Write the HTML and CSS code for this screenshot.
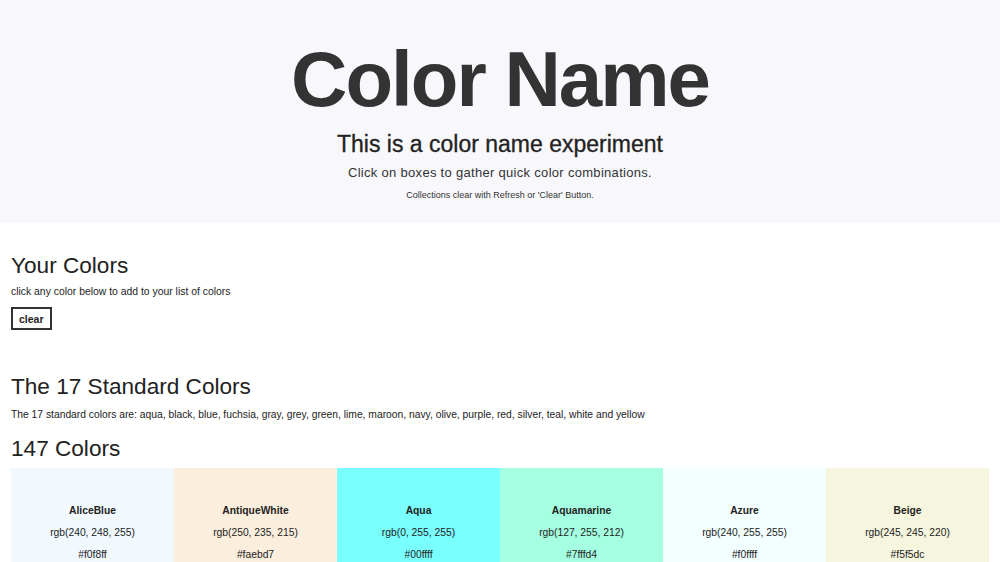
FILE: index.html
```html
<!DOCTYPE html>
<html>
<head>
<meta charset="utf-8">
<link rel="stylesheet" href="styles.css">
</head>
<body>
<header class="hero">
  <h1 class="hero-title">Color Name</h1>
  <h2 class="hero-sub">This is a color name experiment</h2>
  <p class="hero-lead">Click on boxes to gather quick color combinations.</p>
  <p class="hero-note">Collections clear with Refresh or 'Clear' Button.</p>
</header>
<main class="content">
  <section class="your">
    <h2 class="section-title">Your Colors</h2>
    <p class="small">click any color below to add to your list of colors</p>
    <button class="clear-btn">clear</button>
  </section>
  <section class="standard">
    <h2 class="section-title">The 17 Standard Colors</h2>
    <p class="small standard-text">The 17 standard colors are: aqua, black, blue, fuchsia, gray, grey, green, lime, maroon, navy, olive, purple, red, silver, teal, white and yellow</p>
  </section>
  <section class="all">
    <h2 class="section-title">147 Colors</h2>
    <div class="grid">
      <div class="swatch" style="background: rgba(240,248,255,0.9)">
        <div class="name">AliceBlue</div><div class="val">rgb(240, 248, 255)</div><div class="val">#f0f8ff</div>
      </div>
      <div class="swatch" style="background: rgba(250,235,215,0.85)">
        <div class="name">AntiqueWhite</div><div class="val">rgb(250, 235, 215)</div><div class="val">#faebd7</div>
      </div>
      <div class="swatch" style="background: rgba(0,255,255,0.52)">
        <div class="name">Aqua</div><div class="val">rgb(0, 255, 255)</div><div class="val">#00ffff</div>
      </div>
      <div class="swatch" style="background: rgba(127,255,212,0.7)">
        <div class="name">Aquamarine</div><div class="val">rgb(127, 255, 212)</div><div class="val">#7fffd4</div>
      </div>
      <div class="swatch" style="background: rgba(240,255,255,0.8)">
        <div class="name">Azure</div><div class="val">rgb(240, 255, 255)</div><div class="val">#f0ffff</div>
      </div>
      <div class="swatch" style="background: rgba(245,245,220,0.95)">
        <div class="name">Beige</div><div class="val">rgb(245, 245, 220)</div><div class="val">#f5f5dc</div>
      </div>
    </div>
  </section>
</main>
</body>
</html>
```
FILE: styles.css
```css
* { box-sizing: border-box; }
html, body { margin: 0; padding: 0; }
body {
  font-family: "Liberation Sans", Arial, sans-serif;
  color: #333;
  background: #fff;
}
.hero {
  background: #f8f8fc;
  height: 223px;
  padding-top: 38px;
  text-align: center;
}
.hero-title {
  margin: 0;
  font-size: 78px;
  font-weight: bold;
  line-height: 82px;
  color: #333;
  letter-spacing: -2px;
}
.hero-sub {
  margin: 10px 0 0;
  font-size: 23px;
  font-weight: normal;
  line-height: 28px;
  color: #222;
  -webkit-text-stroke: 0.3px #222;
}
.hero-lead {
  margin: 6px 0 0;
  font-size: 13px;
  letter-spacing: 0.3px;
  line-height: 17px;
}
.hero-note {
  margin: 8px 0 0;
  font-size: 9px;
  line-height: 12px;
}
.content {
  padding: 0 11px;
}
.section-title {
  margin: 0;
  font-size: 22.6px;
  font-weight: normal;
  line-height: 26px;
  color: #222;
}
.your { padding-top: 30px; }
.small {
  margin: 6px 0 0;
  font-size: 10.4px;
  line-height: 14px;
  color: #222;
}
.standard-text {
  margin-top: 8px;
  font-size: 10.3px;
}
.clear-btn {
  margin-top: 8px;
  background: #fff;
  border: 2px solid #333;
  border-radius: 0;
  padding: 0 6px;
  height: 23px;
  font-family: inherit;
  font-size: 10.5px;
  font-weight: bold;
  color: #222;
}
.standard { padding-top: 44px; }
.all { padding-top: 14px; }
.grid {
  margin-top: 6px;
  display: grid;
  grid-template-columns: repeat(6, 163px);
}
.swatch {
  height: 110px;
  padding-top: 36px;
  text-align: center;
  font-size: 10.3px;
  color: #222;
}
.swatch .name {
  font-weight: bold;
  line-height: 14px;
  margin-bottom: 8px;
}
.swatch .val {
  line-height: 14px;
  margin-bottom: 8px;
}
```
